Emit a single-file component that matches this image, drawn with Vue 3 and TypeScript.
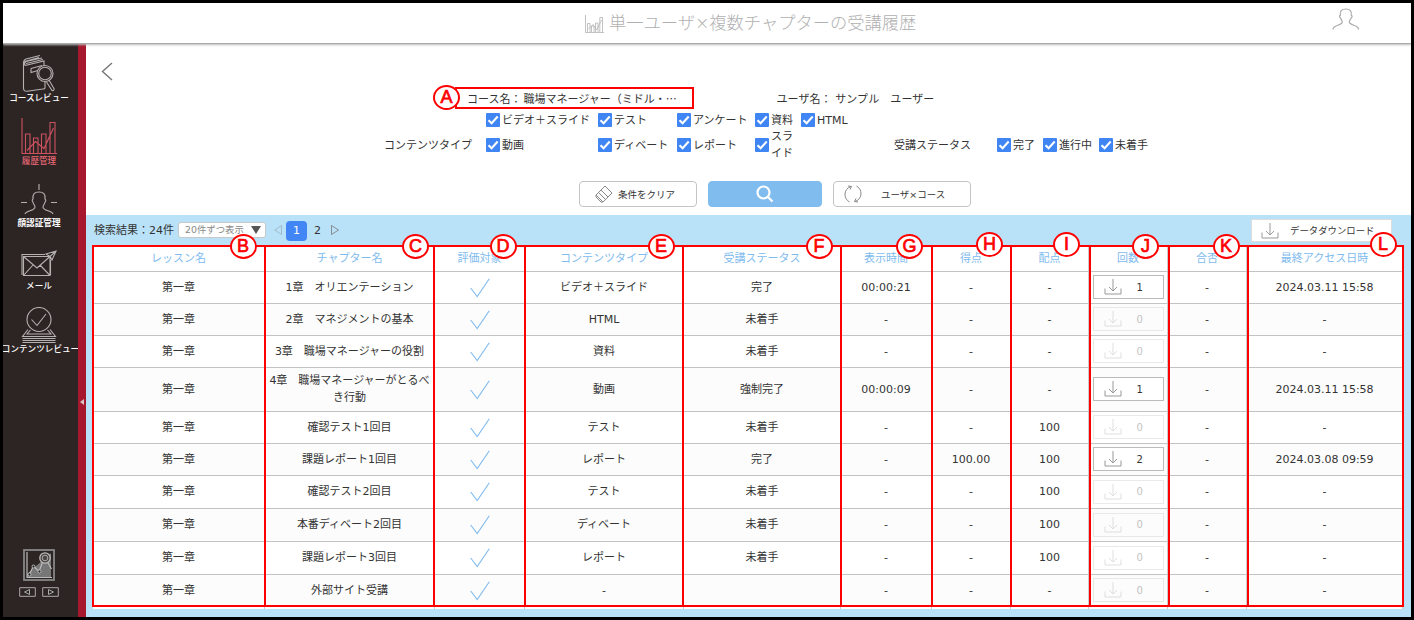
<script setup lang="ts">
interface Row {
  chapter: string
  type: string
  status: string
  time: string
  score: string
  points: string
  count: number | null
  pass: string
  last: string
  height: number
}

const headers: string[] = [
  'レッスン名', 'チャプター名', '評価対象', 'コンテンツタイプ', '受講ステータス',
  '表示時間', '得点', '配点', '回数', '合否', '最終アクセス日時',
]

const row = (
  chapter: string, type: string, status: string, time: string, score: string,
  points: string, count: number, last: string, height: number,
): Row => ({ chapter, type, status, time, score, points, count, pass: '-', last, height })

const rows: Row[] = [
  row('1章　オリエンテーション', 'ビデオ＋スライド', '完了', '00:00:21', '-', '-', 1, '2024.03.11 15:58', 32),
  row('2章　マネジメントの基本', 'HTML', '未着手', '-', '-', '-', 0, '-', 32),
  row('3章　職場マネージャーの役割', '資料', '未着手', '-', '-', '-', 0, '-', 32),
  row('4章　職場マネージャーがとるべき行動', '動画', '強制完了', '00:00:09', '-', '-', 1, '2024.03.11 15:58', 44),
  row('確認テスト1回目', 'テスト', '未着手', '-', '-', '100', 0, '-', 32),
  row('課題レポート1回目', 'レポート', '完了', '-', '100.00', '100', 2, '2024.03.08 09:59', 32),
  row('確認テスト2回目', 'テスト', '未着手', '-', '-', '100', 0, '-', 33),
  row('本番ディベート2回目', 'ディベート', '未着手', '-', '-', '100', 0, '-', 33),
  row('課題レポート3回目', 'レポート', '未着手', '-', '-', '100', 0, '-', 33),
  row('外部サイト受講', '-', '', '-', '-', '-', 0, '-', 31),
]

const typesTop: string[] = ['ビデオ＋スライド', 'テスト', 'アンケート', '資料', 'HTML']
const typesBottom: string[] = ['動画', 'ディベート', 'レポート', 'スライド']
const statuses: string[] = ['完了', '進行中', '未着手']

const marks: { letter: string; x: number; y: number }[] = [
  { letter: 'A', x: 446.5, y: 97 },
  { letter: 'B', x: 243, y: 246.5 },
  { letter: 'C', x: 415.5, y: 246 },
  { letter: 'D', x: 503, y: 246 },
  { letter: 'E', x: 661, y: 246 },
  { letter: 'F', x: 819, y: 246 },
  { letter: 'G', x: 909.5, y: 246 },
  { letter: 'H', x: 989.5, y: 244.5 },
  { letter: 'I', x: 1066.5, y: 244.5 },
  { letter: 'J', x: 1145.5, y: 246 },
  { letter: 'K', x: 1226, y: 246.5 },
  { letter: 'L', x: 1383, y: 244.5 },
]
</script>

<template>
  <div class="frame">
    <header class="top">
      <div class="title">
        <svg class="title-icon" viewBox="0 0 19 18">
          <path d="M.5 0V17.500H19M2.500 17V8.500H5V17M6.500 17V11H9V17M10.500 17V8H13V17M14.800 17V2.500H17.500V17M3.500 14L8 9.500L11.500 15L16.500 5" />
        </svg>
        <span>単一ユーザ×複数チャプターの受講履歴</span>
      </div>
      <svg class="user" viewBox="0 0 28 23">
        <path d="M1 21.500C1 16.500 9.500 18 10.300 14.200C10.500 12.800 8.500 11 8.300 9.500C7.300 9.300 7.200 7.500 8.300 7.300C7.700 3 9.500 1 13.800 1C18.100 1 19.900 3 19.300 7.300C20.400 7.500 20.300 9.300 19.300 9.500C19.100 11 17.100 12.800 17.300 14.200C18.100 18 26.600 16.500 26.600 21.500" />
      </svg>
    </header>

    <div class="body">
      <nav class="side">
        <div class="item book">
          <svg viewBox="0 0 36 38" class="ico">
            <path d="M24 30V34Q24 35 22 35L6 37.200Q2.500 37.500 2.500 34V9Q2.500 6 5 5L19 1.500M4 11.500Q2.500 9 5 7.500L21 4M4 11.500L23 7V12M5 9.500L22 5.500M3.500 7.500L18 3.500M10 14.500L21 11.500M10 14.500V18.500L17 16.500M23 7V11M24 27V31" />
            <circle cx="24" cy="19.500" r="8" /><circle cx="24" cy="19.500" r="6.300" />
            <path d="M25.500 28L31 36.500Q33 37 33.200 35L28 26" />
          </svg>
          <span>コースレビュー</span>
        </div>
        <div class="item chart">
          <svg viewBox="0 0 36 37" class="ico">
            <path d="M1 0V35.500H36M4.500 35.500V16H9V35.500M12.500 35.500V20H17V35.500M20.500 35.500V16H25V35.500M29 35.500V4.500H34V35.500M6 32.500L14.500 23.500L23 30.500L32.500 10" />
          </svg>
          <span>履歴管理</span>
        </div>
        <div class="item face">
          <svg viewBox="0 0 36 32" class="ico">
            <path d="M18 0V6M0 18.500H6M30 18.500H36M4 30C5 26.500 14 27 14 23C14 21 12 20 12 18C11 17.500 11 15.500 12 15C11.500 10 13.500 8 18 8C22.500 8 24.500 10 24 15C25 15.500 25 17.500 24 18C24 20 22 21 22 23C22 27 31 26.500 32 30" />
          </svg>
          <span class="strong">顔認証管理</span>
        </div>
        <div class="item mail">
          <svg viewBox="0 0 36 28" class="ico">
            <path d="M24 4.500H1V25M2.500 6.500H29V25.500H2.500ZM2.500 6.500L16 18L29 6.500M2.500 25.500L12 15M29 25.500L19 15M29.500 10V25M25 4L35 1L31 10L29 6.500ZM29 6.500L35 1" />
          </svg>
          <span>メール</span>
        </div>
        <div class="item review">
          <svg viewBox="0 0 36 38" class="ico">
            <circle cx="18" cy="12.500" r="12" />
            <path d="M10.500 12.500L16 18.500L25 7M7 22.500L1.500 29.500H34.500L29 22.500M9.500 23L6 27H30L26.500 23M1.500 31.500H34.500M1.500 33.500H34.500M1.500 35.500H34.500" />
          </svg>
          <span>コンテンツレビュー</span>
        </div>
        <div class="thumb">
          <svg viewBox="0 0 32 32">
            <path d="M4 28V25L28 4V28Z" fill="#777" />
            <rect x="1" y="1" width="30" height="30" fill="none" stroke="#888" stroke-width="1.800" />
            <path d="M4 3V28.500H29M6 26L10.500 17L16 22.500L20 12M25 14L28.500 20" fill="none" stroke="#bbb" stroke-width="1.200" />
            <circle cx="22" cy="9" r="5.200" fill="#4a4543" stroke="#bbb" stroke-width="1.300" />
            <circle cx="22" cy="9" r="2.800" fill="none" stroke="#aaa" />
            <circle cx="6.500" cy="25.500" r="1.500" fill="#222" stroke="#bbb" />
            <circle cx="10.500" cy="17.500" r="1.500" fill="#222" stroke="#bbb" />
            <circle cx="16.500" cy="22.500" r="1.500" fill="#222" stroke="#bbb" />
          </svg>
          <div class="steps">
            <svg viewBox="0 0 17 10"><path d="M.7.700H16.300V9.300H.7ZM5.500 5L10.500 2.500V7.500Z" /></svg>
            <svg viewBox="0 0 17 10"><path d="M.7.700H16.300V9.300H.7ZM11.500 5L6.500 2.500V7.500Z" /></svg>
          </div>
        </div>
      </nav>
      <div class="rail"><i></i></div>

      <main class="main">
        <section class="filters">
          <svg class="back" viewBox="0 0 12 19"><path d="M11 1L1.500 9.500L11 18" /></svg>
          <div class="names">
            <span class="course">コース名：</span>
            <span class="course-name">職場マネージャー（ミドル・<b>…</b></span>
            <span class="person">ユーザ名： サンプル　ユーザー</span>
          </div>
          <div class="checks first">
            <span></span>
            <label v-for="t in typesTop" :key="t">
              <svg viewBox="0 0 14 14"><rect width="14" height="14" rx="1" /><path d="M2.500 7.200L5.600 10.300L11.700 3.500" /></svg><span>{{ t }}</span>
            </label>
          </div>
          <div class="checks second">
            <span>コンテンツタイプ</span>
            <label v-for="t in typesBottom" :key="t">
              <svg viewBox="0 0 14 14"><rect width="14" height="14" rx="1" /><path d="M2.500 7.200L5.600 10.300L11.700 3.500" /></svg><span>{{ t }}</span>
            </label>
            <span></span>
            <span>受講ステータス</span>
            <label v-for="s in statuses" :key="s">
              <svg viewBox="0 0 14 14"><rect width="14" height="14" rx="1" /><path d="M2.500 7.200L5.600 10.300L11.700 3.500" /></svg><span>{{ s }}</span>
            </label>
          </div>
          <div class="actions">
            <button class="btn clear">
              <svg viewBox="0 0 18 18"><path d="M1 10L10 1L17 8L8 17H6L1 12ZM1 10L8 17M3.500 7.500L10.500 14.500M6 5L13 12M1 12L6 17" /></svg>
              <span>条件をクリア</span>
            </button>
            <button class="btn search">
              <svg viewBox="0 0 18 18"><circle cx="7.500" cy="7.500" r="6" /><path d="M12 12L16.500 16.500" /></svg>
            </button>
            <button class="btn swap">
              <svg viewBox="0 0 18 18"><path d="M7 1.500C-1 4-.5 14 5.500 17M4 1L7.500 1.500L6 4.500M11 16.500C19 14 18.500 4 12.500 1M14 17L10.500 16.500L12 13.500" /></svg>
              <span>ユーザ×コース</span>
            </button>
          </div>
        </section>

        <section class="results">
          <div class="toolbar">
            <span class="total">検索結果：24件</span>
            <div class="select"><span>20件ずつ表示</span><svg viewBox="0 0 10 8"><path d="M0 0H10L5 8Z" /></svg></div>
            <svg class="arrow prev" viewBox="0 0 8 10"><path d="M7.500.500V9.500L.8 5Z" /></svg>
            <span class="page current">1</span>
            <span class="page">2</span>
            <svg class="arrow" viewBox="0 0 8 10"><path d="M.5.500V9.500L7.500 5Z" /></svg>
            <button class="download">
              <svg viewBox="0 0 18 16"><path d="M1 9.500V15H17V9.500M9 0V12M5 8L9 12L13 8" /></svg>
              <span>データダウンロード</span>
            </button>
          </div>

          <div class="table">
            <div class="tr head"><div v-for="h in headers" :key="h" class="td">{{ h }}</div></div>
            <div v-for="r in rows" :key="r.chapter" class="tr" :style="{ height: r.height + 'px' }">
              <div class="td">第一章</div>
              <div class="td">{{ r.chapter }}</div>
              <div class="td"><svg class="tick" viewBox="0 0 20 20"><path d="M.7 10L7.200 18.500L19.300.700" /></svg></div>
              <div class="td">{{ r.type }}</div>
              <div class="td">{{ r.status }}</div>
              <div class="td">{{ r.time }}</div>
              <div class="td">{{ r.score }}</div>
              <div class="td">{{ r.points }}</div>
              <div class="td">
                <button class="count" :class="{ off: !r.count }">
                  <svg viewBox="0 0 18 16"><path d="M1 9.500V15H17V9.500M9 0V12M5 8L9 12L13 8" /></svg>
                  <span>{{ r.count }}</span>
                </button>
              </div>
              <div class="td">{{ r.pass }}</div>
              <div class="td">{{ r.last }}</div>
            </div>
            <div class="tr tail"><div v-for="h in headers" :key="h" class="td"></div></div>
          </div>
        </section>
      </main>
    </div>

    <div class="course-outline"></div>
    <div class="column-outline"><i v-for="h in headers" :key="h"></i></div>
    <div v-for="m in marks" :key="m.letter" class="mark" :style="{ left: m.x + 'px', top: m.y + 'px' }">{{ m.letter }}</div>
  </div>
</template>

<style>
body {
  margin: 0;
  overflow: hidden;
}
</style>

<style scoped>
.frame {
  position: relative;
  box-sizing: border-box;
  width: 1414px;
  height: 620px;
  border: 3px solid #000;
  background: #fff;
  color: #333;
  font: 11px/17px "DejaVu Sans", "Noto Sans CJK JP", sans-serif;
  display: flex;
  flex-direction: column;
  overflow: hidden;
}
svg {
  fill: none;
  flex: none;
  display: block;
}
button {
  font: inherit;
  color: inherit;
  padding: 0;
  margin: 0;
  box-sizing: border-box;
}
.top {
  height: 41px;
  box-sizing: border-box;
  border-bottom: 1px solid #aaa;
  box-shadow: 0 1px 2px #bbb;
  display: flex;
  justify-content: space-between;
  position: relative;
  z-index: 1;
  background: #fff;
}
.title {
  display: flex;
  align-items: center;
  margin-left: 582px;
  height: 40px;
  gap: 5px;
  font-size: 17.25px;
  font-weight: 300;
  color: #b0b0b0;
  white-space: nowrap;
}
.title-icon {
  width: 19px;
  height: 18px;
  stroke: #bbb;
  stroke-width: .9;
  margin-top: 1px;
}
.user {
  width: 28px;
  height: 23px;
  margin: 5px 51px 0 0;
  stroke: #aaa;
  stroke-width: 1.2;
}
.body {
  display: flex;
  flex: 1;
  min-height: 0;
}
.side {
  width: 75px;
  background: #2d2524;
  display: flex;
  flex-direction: column;
  overflow: hidden;
  color: #fff;
  font-size: 8.6px;
  line-height: 12px;
}
.item {
  display: flex;
  flex-direction: column;
  align-items: center;
  white-space: nowrap;
  margin-left: -3px;
}
.item .ico {
  stroke: #b5b1b0;
  stroke-width: 1.1;
  width: 36px;
}
.item span {
  font-weight: 500;
}
.book { padding-top: 10px; }
.book .ico { height: 38px; }
.chart { padding-top: 14px; color: #e86876; }
.chart .ico { height: 37px; stroke: #cc5262; }
.face { padding-top: 17px; }
.face .ico { height: 32px; margin-bottom: 1px; }
.face .strong { font-weight: 700; }
.mail { padding-top: 21px; }
.mail .ico { height: 28px; margin-bottom: 2px; }
.review { padding-top: 15px; margin-right: -3px; }
.review .ico { height: 38px; margin-right: 3px; margin-bottom: -2px; }
.thumb {
  margin: auto 0 20px 20px;
  width: 40px;
}
.thumb > svg {
  width: 32px;
  height: 32px;
}
.steps {
  display: flex;
  gap: 6px;
  margin: 6px 0 0 -4px;
}
.steps svg {
  width: 17px;
  height: 10px;
  stroke: #aaa;
}
.rail {
  width: 8px;
  background: #a5182e;
  display: flex;
  align-items: center;
}
.rail i {
  margin: 143px 0 0 2px;
  border: 3px solid transparent;
  border-left-width: 0;
  border-right: 4px solid #d8c4c6;
}
.main {
  flex: 1;
  display: flex;
  flex-direction: column;
  min-width: 0;
}
.filters {
  height: 171px;
  display: flex;
  flex-direction: column;
  align-items: flex-start;
}
.back {
  width: 12px;
  height: 19px;
  margin: 18px 0 0 15px;
  stroke: #777;
  stroke-width: 1.4;
}
.names {
  display: flex;
  height: 17px;
  margin: 10px 0 0 381px;
  white-space: pre;
}
.course {
  width: 56.500px;
}
.course-name {
  width: 253px;
}
.course-name b {
  font-family: "Noto Sans CJK JP", sans-serif;
  font-weight: 400;
  line-height: 1;
}
.person {
  letter-spacing: .08px;
}
.checks {
  display: grid;
  grid-template-columns: 102px 112px 79px 78px 46px 93px 103px 46px 56px 60px;
  align-items: center;
  margin-left: 298px;
}
.checks.first {
  height: 20px;
  margin-top: 2px;
}
.checks.second {
  height: 34px;
  margin-top: -2px;
}
.checks label {
  display: flex;
  align-items: center;
  gap: 2px;
}
.checks label svg {
  width: 14px;
  height: 14px;
}
.checks rect {
  fill: #3f85f4;
}
.checks path {
  stroke: #fff;
  stroke-width: 2.1;
}
.actions {
  display: flex;
  gap: 11px;
  margin: 19px 0 0 493px;
  font-size: 9.5px;
}
.btn {
  height: 26px;
  border: 1px solid #c4c4c4;
  border-radius: 4px;
  background: #fff;
  display: flex;
  align-items: center;
}
.btn svg {
  width: 18px;
  height: 18px;
  stroke: #888;
}
.clear { width: 118px; padding-left: 15px; }
.clear span { margin-left: 5px; }
.search { width: 114px; background: #81bcef; border-color: #81bcef; justify-content: center; }
.search svg { stroke: #fff; stroke-width: 2.2; }
.swap { width: 138px; padding-left: 10px; }
.swap span { margin-left: 19px; }
.results {
  flex: 1;
  background: #b9e2f9;
  padding: 0 8px 0 7px;
}
.toolbar {
  height: 31px;
  display: flex;
  align-items: center;
}
.total {
  width: 84px;
  padding-left: 1px;
}
.select {
  box-sizing: border-box;
  width: 88px;
  height: 16px;
  border: 1px solid #c8c8c8;
  border-radius: 3px;
  background: #fff;
  color: #888;
  font-size: 9.4px;
  line-height: 14px;
  display: flex;
  align-items: center;
  justify-content: space-between;
  padding: 0 4px 0 6px;
  margin-top: -1px;
}
.select svg {
  width: 10px;
  height: 8px;
  fill: #555;
}
.arrow {
  width: 8px;
  height: 10px;
  stroke: #777;
  stroke-width: .8;
  margin-left: 3px;
  margin-top: -1px;
}
.prev {
  opacity: .45;
  margin: -1px 4px 0 8px;
}
.page {
  width: 21px;
  height: 20px;
  line-height: 20px;
  text-align: center;
  border-radius: 4px;
}
.current {
  background: #4286f5;
  color: #fff;
}
.download {
  margin: 0 11px 0 auto;
  width: 141px;
  height: 23px;
  border: 1px solid #ddd;
  background: #fff;
  display: flex;
  align-items: center;
  font-size: 9.4px;
  padding-left: 9px;
  gap: 11px;
}
.download svg,
.count svg {
  width: 18px;
  height: 16px;
  stroke: #999;
}
.table {
  width: 1310px;
  background: #fff;
}
.tr {
  box-sizing: border-box;
  display: grid;
  grid-template-columns: 172px 170px 90px 159px 157px 91px 79px 78px 79px 79px 156px;
  border-bottom: 1px solid #c3c3c3;
}
.tr:nth-child(odd) {
  background: #fcfcfc;
}
.tr .td {
  display: flex;
  align-items: center;
  justify-content: center;
  text-align: center;
  border-right: 1px solid #ccc;
  min-width: 0;
  padding-bottom: 1px;
}
.tr.head {
  height: 26px;
  background: #fff;
  color: #80bbee;
}
.tr.head .td {
  padding-bottom: 0;
}
.tr.tail {
  height: 3px;
  border: 0;
  background: #fff;
}
.tr.tail .td {
  padding: 0;
}
.tr:nth-last-child(2) {
  border: 0;
}
.tick {
  width: 20px;
  height: 20px;
  stroke: #80bbee;
  stroke-width: 1.1;
  margin-top: 1px;
}
.count {
  width: 71px;
  height: 24px;
  border: 1px solid #bbb;
  background: #fff;
  display: flex;
  align-items: center;
  padding-left: 10px;
  font-size: 10px;
}
.count span {
  margin-left: 15px;
}
.count.off {
  opacity: .3;
}
.course-outline {
  position: absolute;
  left: 452px;
  top: 84px;
  width: 239px;
  height: 22px;
  box-sizing: border-box;
  border: 2px solid #f00;
}
.column-outline {
  position: absolute;
  left: 89px;
  top: 242px;
  width: 1312px;
  height: 362px;
  box-sizing: border-box;
  border: 2px solid #f00;
  border-left: 0;
  display: grid;
  grid-template-columns: 172px 169px 91px 158px 158px 91px 79px 79px 79px 79px 155px;
}
.column-outline i {
  border-left: 2px solid #f00;
}
.mark {
  position: absolute;
  box-sizing: border-box;
  width: 27px;
  height: 25px;
  margin: -15.500px 0 0 -16.500px;
  border: 2px solid #f00;
  border-radius: 50%;
  background: #fff;
  color: #f00;
  font: 400 18px/20px "Liberation Sans", sans-serif;
  -webkit-text-stroke: .7px #f00;
  text-align: center;
}
</style>
